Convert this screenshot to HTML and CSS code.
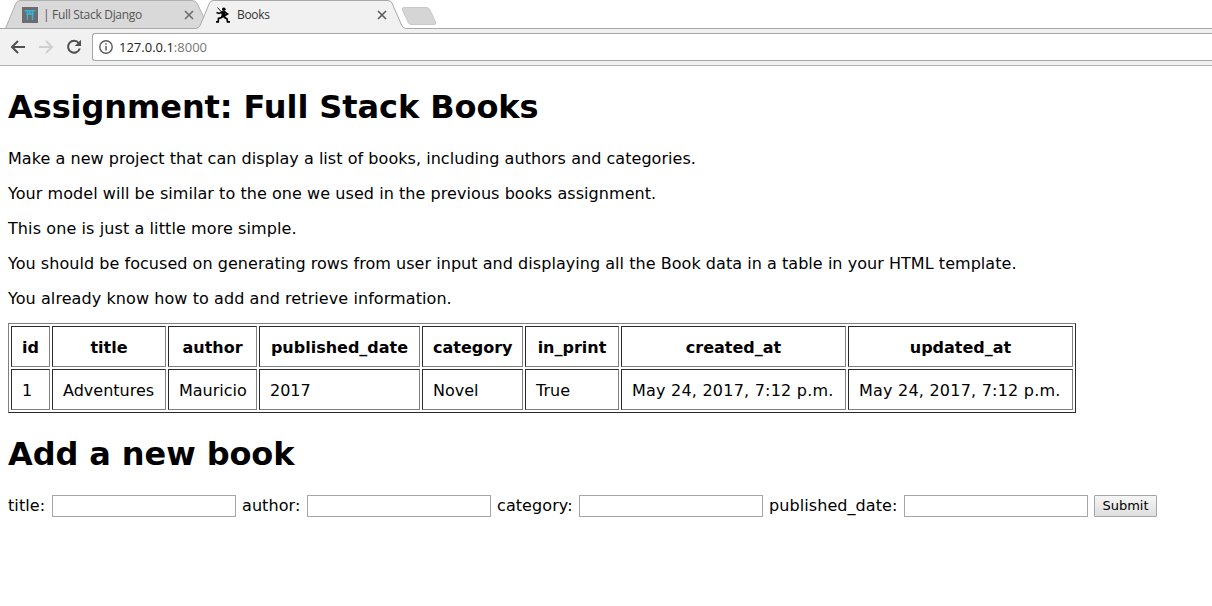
FILE: index.html
```
<!DOCTYPE html>
<html lang="en">
<head>
<meta charset="utf-8">
<title>Books</title>
<link rel="stylesheet" href="styles.css">
</head>
<body>
<header class="browser">
  <div class="tabstrip">
    <svg class="tab-shapes" width="1212" height="29" viewBox="0 0 1212 29">
      <path d="M5.500 28.500L15.500 4Q17 .5 20 .5H192Q196 .5 197.500 4L209 28.500Z" fill="#d9d9d9" stroke="#b0b0b0"/>
      <path d="M0 28.500H196C199 28 200 26 201 23.500L209 4Q210.500.5 213 .5H388Q391 .5 392 3L401.500 25Q403 28.500 406 28.500H1212V30H0Z" fill="#f1f1f1" stroke="#a9a9a9"/>
      <path d="M404 7.500H426Q429 7.500 430 10L435.500 22Q436.500 24.500 434 24.500H411Q409 24.500 408 22L402.500 10Q401.500 7.500 404 7.500Z" fill="#d5d5d5" stroke="#c8c8c8"/>
    </svg>
    <div class="tab tab-back">
      <svg width="16" height="16" viewBox="0 0 16 16"><rect width="16" height="16" fill="#6c6c70"/><path d="M2.500 3.800H13.500M4 7H12M5.500 4V13M10.500 4V13M8 4V7" fill="none" stroke="#36b4d6" stroke-width="1.400"/></svg>
      <span class="tab-title title-django">| Full Stack Django</span>
      <svg class="close" width="10" height="10" viewBox="0 0 10 10"><path d="M1 1L9 9M9 1L1 9" stroke="#6c6c6c" stroke-width="1.600"/></svg>
    </div>
    <div class="tab tab-front">
      <svg width="16" height="16" viewBox="0 0 16 16"><path d="M2.500 .5L7 5.500" fill="none" stroke="#000" stroke-width=".9"/><path d="M1.500 5.500L4 6.500L7.500 5M9.500 5L12.500 7L10 8.500" fill="none" stroke="#000" stroke-width="1.600"/><path d="M6.500 10.500L3.500 11.500L3.200 14.800H1M9.500 10.500L12 11.800L12.500 14.800H15" fill="none" stroke="#000" stroke-width="1.700"/><circle cx="8.800" cy="2.300" r="1.800"/><path d="M6 4.200L10.500 4L10 8L11 11.500L8 10.600L5 12L6.600 8Z"/></svg>
      <span class="tab-title title-books">Books</span>
      <svg class="close" width="10" height="10" viewBox="0 0 10 10"><path d="M1 1L9 9M9 1L1 9" stroke="#5a5a5a" stroke-width="1.600"/></svg>
    </div>
  </div>
  <div class="toolbar">
    <svg class="nav" width="16" height="16" viewBox="0 0 16 16"><path d="M15 8H2.500M8 2L2 8L8 14" fill="none" stroke="#505050" stroke-width="2"/></svg>
    <svg class="nav" width="16" height="16" viewBox="0 0 16 16"><path d="M1 8H13.500M8 2L14 8L8 14" fill="none" stroke="#d0d0d0" stroke-width="2"/></svg>
    <svg class="nav" width="16" height="16" viewBox="0 0 16 16"><path d="M12.800 4A6 6 0 1 0 13.800 9.500" fill="none" stroke="#505050" stroke-width="2"/><path d="M15 .8V7H8.800Z" fill="#505050"/></svg>
    <div class="omnibox">
      <svg width="14" height="14" viewBox="0 0 14 14"><circle cx="7" cy="7" r="6.200" fill="none" stroke="#5a5a5a" stroke-width="1.400"/><path d="M7 6V10.500M7 3.300V4.800" stroke="#5a5a5a" stroke-width="1.500"/></svg>
      <span class="url">127.0.0.1<span class="port">:8000</span></span>
    </div>
  </div>
</header>
<main class="page">
  <h1 class="heading-main">Assignment: Full Stack Books</h1>
  <p class="p1">Make a new project that can display a list of books, including authors and categories.</p>
  <p class="p2">Your model will be similar to the one we used in the previous books assignment.</p>
  <p class="p3">This one is just a little more simple.</p>
  <p class="p4">You should be focused on generating rows from user input and displaying all the Book data in a table in your HTML template.</p>
  <p class="p5">You already know how to add and retrieve information.</p>
  <table border="1" class="books">
    <colgroup><col class="c-id"><col class="c-title"><col class="c-author"><col class="c-pub"><col class="c-cat"><col class="c-print"><col class="c-time"><col class="c-time"></colgroup>
    <tr><th>id</th><th>title</th><th>author</th><th>published_date</th><th>category</th><th>in_print</th><th>created_at</th><th>updated_at</th></tr>
    <tr><td>1</td><td>Adventures</td><td>Mauricio</td><td>2017</td><td>Novel</td><td>True</td><td class="time">May 24, 2017, 7:12 p.m.</td><td class="time">May 24, 2017, 7:12 p.m.</td></tr>
  </table>
  <h1 class="heading-add">Add a new book</h1>
  <form class="add">
    <label class="l-title" for="title">title:</label><input id="title" type="text">
    <label class="l-author" for="author">author:</label><input id="author" type="text">
    <label class="l-cat" for="category">category:</label><input id="category" type="text">
    <label class="l-pub" for="published">published_date:</label><input id="published" type="text">
    <button type="button">Submit</button>
  </form>
</main>
</body>
</html>
```
FILE: styles.css
```
* { box-sizing: border-box; }
body { margin: 0; height: 606px; overflow: hidden; background: #fff; color: #000; font: 16px/19px Verdana, "DejaVu Sans", sans-serif; }
svg { display: block; flex: none; }
.browser { font-family: "Open Sans", sans-serif; }
.tabstrip { position: relative; display: flex; height: 29px; }
.tab-shapes { position: absolute; left: 0; top: 0; }
.tab { position: relative; display: flex; align-items: center; height: 30px; padding-left: 22px; }
.tab-back { width: 193px; }
.tab-front { width: 194px; }
.tab-title { margin-left: 6px; font-size: 12px; letter-spacing: -0.3px; line-height: 16px; white-space: nowrap; color: #333; }
.title-django { margin-left: 5px; color: #555; }
.close { margin-left: auto; }
.tab-back .close { margin-right: -1px; }
.toolbar { display: flex; align-items: center; height: 37px; padding-left: 10px; background: #f1f1f1; border-bottom: 1px solid #b4b4b4; }
.nav { margin-right: 12px; }
.omnibox { display: flex; align-items: center; flex: 1; height: 28px; margin-left: -2px; padding-left: 6px; background: #fff; border: 1px solid #a5a5a5; border-right: 0; border-radius: 3px 0 0 3px; }
.url { margin-left: 6px; font-size: 13px; color: #222; }
.port { color: #777; }
.page { display: flow-root; padding: 0 8px; }
h1 { margin: 21.44px 0; font-size: 32px; line-height: 37px; padding-top: 2px; white-space: nowrap; }
.heading-main { letter-spacing: -0.08px; }
.heading-add { letter-spacing: -0.1px; }
p { height: 19px; margin: 16px 0; line-height: 21px; white-space: nowrap; }
.p1 { letter-spacing: 0.047px; }
.p2 { letter-spacing: 0.06px; }
.p3 { letter-spacing: 0.1px; }
.p4 { letter-spacing: 0.045px; }
.p5 { letter-spacing: 0.08px; }
.books { width: 1068px; table-layout: fixed; border-spacing: 2px; border: 1px solid; border-color: #808080 #2b2b2b #2b2b2b #808080; }
.books th, .books td { height: 41px; padding: 11px 10px 9px; border: 1px solid; border-color: #2b2b2b #808080 #808080 #2b2b2b; white-space: nowrap; }
.books .time { letter-spacing: 0.22px; }
.c-id { width: 39px; }
.c-title { width: 114px; }
.c-author { width: 89px; }
.c-pub { width: 161px; }
.c-cat { width: 101px; }
.c-print { width: 94px; }
.c-time { width: 225px; }
.add { display: flex; align-items: center; height: 22px; white-space: nowrap; }
.add input { flex: none; width: 184px; height: 22px; margin: 0 6px 0 0; border: 1px solid #a6a6a6; background: #fff; }
.add label { flex: none; letter-spacing: 0.08px; }
.l-title { width: 44px; }
.l-author { width: 65px; }
.l-cat { width: 82px; }
.l-pub { width: 135px; }
.add button { width: 63px; height: 22px; padding: 1px 0 0; border: 1px solid #a5a5a5; border-radius: 1px; background: linear-gradient(#f6f6f6, #dedede); color: #000; font: 13px/18px Verdana, "DejaVu Sans", sans-serif; }
```
